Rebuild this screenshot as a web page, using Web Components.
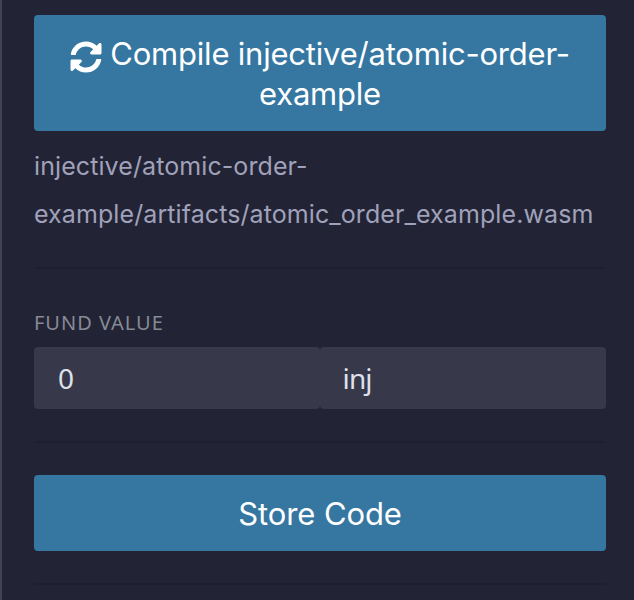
<!DOCTYPE html>
<html lang="en">
<head>
<meta charset="utf-8">
<title>Contract panel</title>
<style>
html, body { margin: 0; height: 100%; background: #222334; overflow: hidden; }
</style>
</head>
<body>
<side-panel>
  <action-button class="compile"><sync-icon slot="icon"></sync-icon>Compile injective/atomic-order-<br>example</action-button>
  <artifact-path>injective/atomic-order-<br>example/artifacts/atomic_order_example.wasm</artifact-path>
  <panel-divider></panel-divider>
  <fund-field label="FUND VALUE"><span slot="amount">0</span><span slot="denom">inj</span></fund-field>
  <panel-divider></panel-divider>
  <action-button class="store">Store Code</action-button>
  <panel-divider></panel-divider>
</side-panel>
<script>
const define = (name, html) => customElements.define(name, class extends HTMLElement {
  constructor() {
    super();
    const t = document.createElement('template');
    t.innerHTML = html;
    this.attachShadow({ mode: 'open' }).append(t.content.cloneNode(true));
  }
  connectedCallback() {
    const label = this.shadowRoot.querySelector('label');
    if (label) label.textContent = this.getAttribute('label');
  }
});

define('side-panel', `<style>
:host { display: flex; flex-direction: column; box-sizing: border-box; height: 600px; width: 634px;
  padding: 15px 28px 0 32px; border-left: 2px solid #414256; background: #222334;
  font-family: Inter, "Liberation Sans", sans-serif; }
</style><slot></slot>`);

define('action-button', `<style>
:host { display: block; box-sizing: border-box; border-radius: 4px; background: #3577a1; }
button { display: block; width: 100%; box-sizing: border-box; margin: 0; border: 0; padding: 19px 0 17px; background: none;
  color: #fff; font: 400 31px/40px Inter, "Liberation Sans", sans-serif; letter-spacing: -0.21px; text-align: center; white-space: nowrap; }
:host(.store) { margin: 32px 0; }
:host(.store) button { letter-spacing: -0.1px; }
</style><button><slot name="icon"></slot><slot></slot></button>`);

define('sync-icon', `<style>
:host { display: inline-block; width: 32px; height: 32px; margin-right: 8px; vertical-align: -8px; }
svg { display: block; }
</style><svg width="32" height="32" viewBox="0 0 512 512" fill="#fff"><path d="M370.72 133.28C339.458 104.008 298.888 87.962 255.848 88c-77.458.068-144.328 53.178-162.791 126.85-1.344 5.363-6.122 9.15-11.651 9.15H24.103c-7.498 0-13.194-6.807-11.807-14.176C33.933 94.924 134.813 8 256 8c66.448 0 126.791 26.136 171.315 68.685L463.03 40.97C478.149 25.851 504 36.559 504 57.941V192c0 13.255-10.745 24-24 24H345.941c-21.382 0-32.09-25.851-16.971-40.971l41.75-41.749zM32 296h134.059c21.382 0 32.09 25.851 16.971 40.971l-41.75 41.75c31.262 29.273 71.835 45.319 114.876 45.28 77.418-.07 144.315-53.144 162.787-126.849 1.344-5.363 6.122-9.15 11.651-9.15h57.304c7.498 0 13.194 6.807 11.807 14.176C478.067 417.076 377.187 504 256 504c-66.448 0-126.791-26.136-171.315-68.685L48.97 471.03C33.851 486.149 8 475.441 8 454.059V320c0-13.255 10.745-24 24-24z"/></svg>`);

define('artifact-path', `<style>
:host { display: block; padding: 11px 0 29px; color: #a0a1ba; font-size: 25px; line-height: 48px; letter-spacing: 0.09px; white-space: nowrap; }
</style><slot></slot>`);

define('panel-divider', `<style>
:host { display: block; height: 2px; background: #1f1f2f; }
</style>`);

define('fund-field', `<style>
:host { display: block; padding: 39px 0 32px; }
label { display: block; height: 30px; margin-bottom: 9px; font: 400 20px/30px "Noto Sans", sans-serif; letter-spacing: 0.98px; color: #878a94; }
.row { display: grid; grid-template-columns: 1fr 1fr; }
.box { height: 62px; box-sizing: border-box; padding: 0 24px; border-radius: 4px; background: #37384a;
  color: #dfe1ea; font: 400 28px/62px "Noto Sans", sans-serif; }
.box + .box { padding-left: 22.6px; letter-spacing: -0.9px; }
</style><label></label><div class="row"><div class="box"><slot name="amount"></slot></div><div class="box"><slot name="denom"></slot></div></div>`);
</script>
</body>
</html>
